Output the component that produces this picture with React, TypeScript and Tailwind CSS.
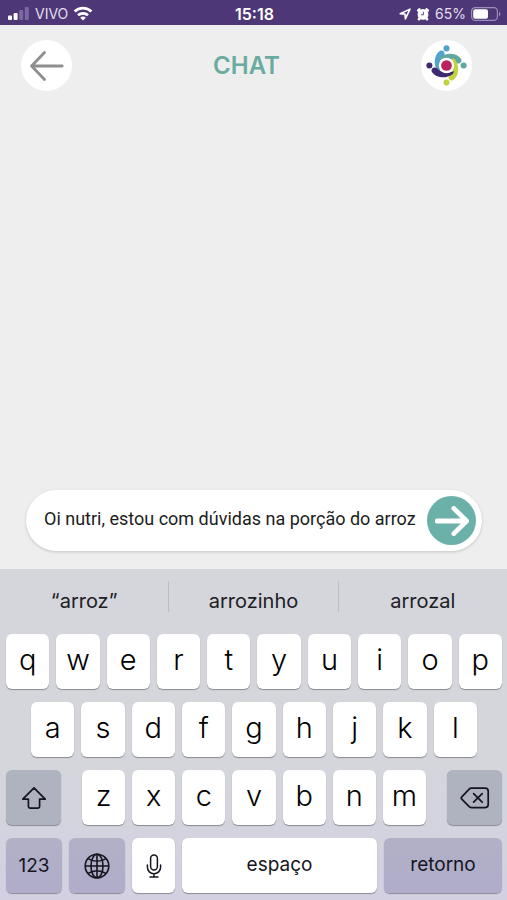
import { useState, type ReactNode } from "react";

const ROW_TOP = ["q", "w", "e", "r", "t", "y", "u", "i", "o", "p"];
const ROW_MIDDLE = ["a", "s", "d", "f", "g", "h", "j", "k", "l"];
const ROW_BOTTOM = ["z", "x", "c", "v", "b", "n", "m"];
const SUGGESTIONS = ["“arroz”", "arrozinho", "arrozal"];

const LOGO_PEOPLE = [
  { color: "#4fa3cf", turn: 0 },
  { color: "#5fa8a0", turn: 90 },
  { color: "#c3d240", turn: 180 },
  { color: "#3f2a70", turn: 270 },
];

function SignalIcon() {
  return (
    <svg viewBox="0 0 22 14" className="h-[14px] w-[22px]" aria-hidden>
      <rect x="0" y="8.5" width="4" height="4.5" rx="1" fill="#fff" />
      <rect x="5.6" y="6" width="4" height="7" rx="1" fill="#fff" />
      <rect x="11.2" y="3" width="4" height="10" rx="1" fill="#7c69a3" />
      <rect x="16.8" y="0" width="4" height="13" rx="1" fill="#7c69a3" />
    </svg>
  );
}

function WifiIcon() {
  return (
    <svg viewBox="0 0 20 15" className="h-[15px] w-5" aria-hidden>
      <g fill="none" stroke="#fff" strokeWidth="2.8">
        <path d="M1.6 5.6a12 12 0 0 1 16.8 0" />
        <path d="M5 9.3a7.2 7.2 0 0 1 10 0" />
      </g>
      <path d="M10 14.6 7.2 11.8a4 4 0 0 1 5.6 0z" fill="#fff" />
    </svg>
  );
}

function LocationIcon() {
  return (
    <svg viewBox="0 0 12 12" className="h-3 w-3" aria-hidden>
      <path
        d="M1.2 5.8 11 1.1 6.4 10.9 6 6.1z"
        fill="none"
        stroke="#fff"
        strokeWidth="1.6"
        strokeLinejoin="round"
      />
    </svg>
  );
}

function AlarmIcon() {
  return (
    <svg viewBox="0 0 14 14" className="h-[14px] w-[14px]" aria-hidden>
      <circle cx="7" cy="7.4" r="5.4" fill="#fff" />
      <g stroke="#fff" strokeWidth="2.6" strokeLinecap="round">
        <path d="M2.2 3.4 3.4 2.4M11.8 3.4 10.6 2.4M3 12.2l1-1.2M11 12.2l-1-1.2" />
      </g>
      <path
        d="M7.4 5.2v2.6H5.4"
        fill="none"
        stroke="#4d3776"
        strokeWidth="0.9"
        strokeLinecap="round"
      />
    </svg>
  );
}

function BatteryIcon() {
  return (
    <svg viewBox="0 0 30 14" className="h-[14px] w-[30px]" aria-hidden>
      <rect
        x="0.6"
        y="0.6"
        width="25.8"
        height="12.8"
        rx="3.6"
        fill="none"
        stroke="#9d8fbb"
        strokeWidth="1.2"
      />
      <rect x="2.2" y="2.2" width="14.8" height="9.6" rx="2" fill="#fff" />
      <path d="M28 4.8c2 .8 2 3.6 0 4.4z" fill="#9d8fbb" />
    </svg>
  );
}

function BackArrowIcon() {
  return (
    <svg viewBox="0 0 34 30" className="h-[30px] w-[34px]" aria-hidden>
      <path
        d="M14.5 1.5 1.6 15l12.9 13.5M1.6 15h30.6"
        fill="none"
        stroke="#8e8e8e"
        strokeWidth="2.8"
        strokeLinecap="round"
        strokeLinejoin="round"
      />
    </svg>
  );
}

function SendArrowIcon() {
  return (
    <svg viewBox="0 0 34 30" className="h-[30px] w-[34px]" aria-hidden>
      <path
        d="M2.2 15h29M18.8 2.4 31.6 15 18.8 27.6"
        fill="none"
        stroke="#fff"
        strokeWidth="4.8"
        strokeLinecap="round"
        strokeLinejoin="round"
      />
    </svg>
  );
}

function LogoIcon() {
  return (
    <svg viewBox="-76 -76 152 152" className="h-full w-full" aria-hidden>
      {LOGO_PEOPLE.map((p) => (
        <g key={p.color} fill={p.color} transform={`rotate(${p.turn})`}>
          <circle cx="0" cy="-51" r="9" />
          <path d="M-20-43C-9-49-1-36-9-27C-20-18-24-6-17 23L-25 19C-40-2-38-30-20-43z" />
        </g>
      ))}
      <circle r="23" fill="#fff" />
      <circle r="16" fill="#b9235f" />
    </svg>
  );
}

function ShiftIcon() {
  return (
    <svg viewBox="0 0 26 24" className="h-6 w-[26px]" aria-hidden>
      <path
        d="M13 1.8 1.8 13.2h5.6v7.4q0 1.6 1.6 1.6h8q1.6 0 1.6-1.6v-7.4h5.6z"
        fill="none"
        stroke="#15151d"
        strokeWidth="1.7"
        strokeLinejoin="round"
      />
    </svg>
  );
}

function DeleteIcon() {
  return (
    <svg viewBox="0 0 30 22" className="h-[22px] w-[30px]" aria-hidden>
      <g
        fill="none"
        stroke="#15151d"
        strokeWidth="1.7"
        strokeLinecap="round"
        strokeLinejoin="round"
      >
        <path d="M11.4 1.2h13.8q3 0 3 3v13.4q0 3-3 3H11.4q-1.3 0-2.2-.9L1.8 12.2q-1.1-1.2 0-2.4L9.2 2.1q.9-.9 2.2-.9z" />
        <path d="m13.6 6.6 8.6 8.6M22.2 6.6l-8.6 8.6" />
      </g>
    </svg>
  );
}

function GlobeIcon() {
  return (
    <svg viewBox="0 0 26 26" className="h-[26px] w-[26px]" aria-hidden>
      <g fill="none" stroke="#15151d" strokeWidth="1.6">
        <circle cx="13" cy="13" r="11.8" />
        <ellipse cx="13" cy="13" rx="6" ry="11.8" />
        <path d="M13 1.2v23.6M1.2 13h23.6M4 5.6q9 5.4 18 0M4 20.4q9-5.4 18 0" />
      </g>
    </svg>
  );
}

function MicIcon() {
  return (
    <svg viewBox="0 0 16 24" className="h-6 w-4" aria-hidden>
      <g fill="none" stroke="#15151d" strokeWidth="1.5" strokeLinecap="round">
        <rect x="4.6" y="1" width="6.8" height="15" rx="3.4" />
        <path d="M1.4 11v2.2a6.6 6.6 0 0 0 13.2 0V11M8 19.8v3M4 23h8" />
      </g>
    </svg>
  );
}

function Key({
  children,
  className,
  label,
  onPress,
}: {
  children: ReactNode;
  className: string;
  label?: string;
  onPress?: () => void;
}) {
  return (
    <button
      type="button"
      aria-label={label}
      onClick={onPress}
      className={`flex h-[55px] items-center justify-center rounded-md shadow-[0_1px_1px_#8a8a92] ${className}`}
    >
      {children}
    </button>
  );
}

function LetterKeys({
  letters,
  onType,
}: {
  letters: string[];
  onType: (letter: string) => void;
}) {
  return letters.map((letter) => (
    <Key
      key={letter}
      className="min-w-0 flex-1 bg-white pb-1 text-[29px] leading-9 font-light text-black"
      onPress={() => onType(letter)}
    >
      {letter}
    </Key>
  ));
}

export default function App() {
  const [message, setMessage] = useState(
    "Oi nutri, estou com dúvidas na porção do arroz",
  );
  const type = (text: string) => setMessage((m) => m + text);

  return (
    <div className="flex min-h-screen flex-col bg-[#eeeeee] font-[Inter,sans-serif]">
      <div className="grid h-[25px] grid-cols-[1fr_auto_1fr] items-center bg-[#4d3776] pt-0.5 pr-1.5 pl-2 text-sm leading-5 text-white">
        <div className="flex items-center gap-[5px]">
          <SignalIcon />
          <span className="text-[#e4dfee]">VIVO</span>
          <WifiIcon />
        </div>
        <span className="text-base leading-5 font-semibold">15:18</span>
        <div className="flex items-center justify-end gap-[5px]">
          <LocationIcon />
          <AlarmIcon />
          <span className="text-[#e4dfee]">65%</span>
          <BatteryIcon />
        </div>
      </div>

      <header className="flex items-center justify-between pt-[15px] pr-[35px] pl-[21px]">
        <button
          type="button"
          aria-label="Voltar"
          className="flex h-[51px] w-[51px] items-center justify-center rounded-full bg-white"
        >
          <BackArrowIcon />
        </button>
        <h1 className="text-2xl font-semibold text-[#6aaba0]">CHAT</h1>
        <div className="h-[51px] w-[51px] rounded-full bg-white">
          <LogoIcon />
        </div>
      </header>

      <main className="flex-1" />

      <form
        className="mr-[25px] mb-[18px] ml-[26px] flex h-[61px] items-center rounded-full bg-white pr-1.5 pl-[18px] shadow-[0_1px_3px_#c4c4c4]"
        onSubmit={(e) => {
          e.preventDefault();
          setMessage("");
        }}
      >
        <input
          type="text"
          aria-label="Mensagem"
          value={message}
          onChange={(e) => setMessage(e.target.value)}
          className="min-w-0 flex-1 bg-transparent pb-1 font-[Roboto,sans-serif] text-lg leading-6 text-[#1c1c1c] outline-none"
        />
        <button
          type="submit"
          aria-label="Enviar"
          className="ml-2 flex h-[49px] w-[49px] shrink-0 items-center justify-center rounded-full bg-[#6bb1aa]"
        >
          <SendArrowIcon />
        </button>
      </form>

      <section
        aria-label="Teclado"
        className="bg-linear-to-b from-[#d4d6dc] from-60% to-[#d3d0e2] pr-[5px] pb-[7px] pl-1.5"
      >
        <div className="-mr-[5px] -ml-1.5 flex h-[65px] items-start divide-x divide-[#bcbdc3] pt-3">
          {SUGGESTIONS.map((word) => (
            <button
              key={word}
              type="button"
              className="h-[31px] flex-1 basis-0 pt-2 text-xl leading-6 text-[#202024]"
              onClick={() => type(" ")}
            >
              {word}
            </button>
          ))}
        </div>

        <div className="flex flex-col gap-[13px]">
          <div className="flex gap-[7px]">
            <LetterKeys letters={ROW_TOP} onType={type} />
          </div>
          <div className="flex gap-[7px] px-[25px]">
            <LetterKeys letters={ROW_MIDDLE} onType={type} />
          </div>
          <div className="flex">
            <Key className="w-[55px] bg-[#aeb3bf]" label="Maiúsculas">
              <ShiftIcon />
            </Key>
            <div className="mx-[21px] flex flex-1 gap-[7px]">
              <LetterKeys letters={ROW_BOTTOM} onType={type} />
            </div>
            <Key
              className="w-[55px] bg-[#aeb3bf]"
              label="Apagar"
              onPress={() => setMessage((m) => m.slice(0, -1))}
            >
              <DeleteIcon />
            </Key>
          </div>
          <div className="flex gap-[7px] text-[19px] text-[#15151d]">
            <Key className="w-14 bg-linear-to-b from-[#b1b1c6] to-[#b0acca] pt-0.5">
              123
            </Key>
            <Key
              className="w-14 bg-linear-to-b from-[#b1b1c6] to-[#b0acca]"
              label="Idioma"
            >
              <GlobeIcon />
            </Key>
            <Key className="w-[43px] bg-white" label="Ditado">
              <MicIcon />
            </Key>
            <Key className="flex-1 bg-white" onPress={() => type(" ")}>
              espaço
            </Key>
            <Key className="w-[118px] bg-linear-to-b from-[#b1b1c6] to-[#b0acca]">
              retorno
            </Key>
          </div>
        </div>
      </section>
    </div>
  );
}
